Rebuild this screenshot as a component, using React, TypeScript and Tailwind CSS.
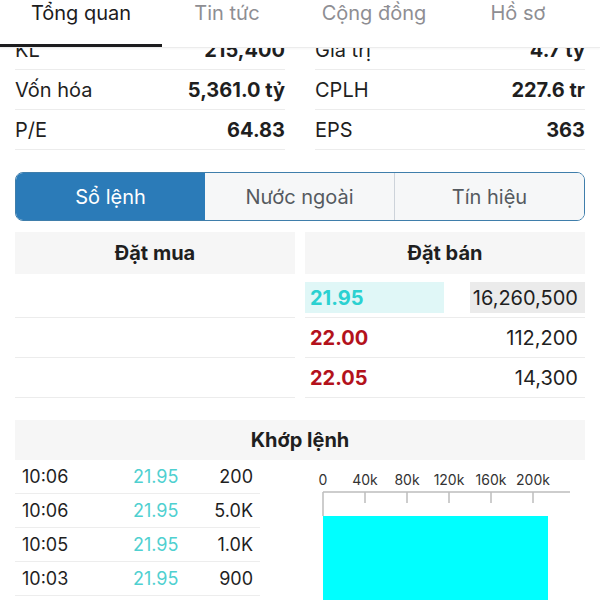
import React from "react";

// ── data ─────────────────────────────────────────────────────────────────────

const TABS = [
  { label: "Tổng quan", width: "w-[162px]", active: true },
  { label: "Tin tức", width: "w-[130px]", active: false },
  { label: "Cộng đồng", width: "w-[164px]", active: false },
  { label: "Hồ sơ", width: "w-[124px]", active: false },
];

const STATS_LEFT = [
  ["KL", "215,400"],
  ["Vốn hóa", "5,361.0 tỷ"],
  ["P/E", "64.83"],
];

const STATS_RIGHT = [
  ["Giá trị", "4.7 tỷ"],
  ["CPLH", "227.6 tr"],
  ["EPS", "363"],
];

const ASKS = [
  { price: "22.00", vol: "112,200" },
  { price: "22.05", vol: "14,300" },
];

const TRADES = [
  ["10:06", "21.95", "200"],
  ["10:06", "21.95", "5.0K"],
  ["10:05", "21.95", "1.0K"],
  ["10:03", "21.95", "900"],
];

const TICKS = ["0", "40k", "80k", "120k", "160k", "200k"];

// ── pieces ───────────────────────────────────────────────────────────────────

function StatColumn({ rows }: { rows: string[][] }) {
  return (
    <div className="flex flex-col">
      {rows.map(([label, value]) => (
        <div
          key={label}
          className="flex h-[40px] items-center justify-between border-b border-[#ececec]"
        >
          <span className="text-[20px] text-[#1f1f1f]">{label}</span>
          <span className="text-[20px] font-bold text-[#1f1f1f]">{value}</span>
        </div>
      ))}
    </div>
  );
}

function VolumeChart() {
  return (
    <svg width="280" height="140" viewBox="0 0 280 140" className="block">
      {TICKS.map((t, i) => (
        <text
          key={t}
          x={18 + i * 42}
          y={25}
          textAnchor="middle"
          fontSize="14"
          fill="#333"
          fontFamily="Inter, sans-serif"
        >
          {t}
        </text>
      ))}
      <line x1="18" y1="32" x2="265" y2="32" stroke="#bdbdbd" strokeWidth="1.5" />
      {TICKS.map((t, i) => (
        <line
          key={t}
          x1={18 + i * 42}
          y1="32"
          x2={18 + i * 42}
          y2={i === 0 ? 56 : 43}
          stroke="#bdbdbd"
          strokeWidth="1.5"
        />
      ))}
      <rect x="18" y="56" width="225" height="90" fill="#00ffff" />
    </svg>
  );
}

// ── page ─────────────────────────────────────────────────────────────────────

export default function App() {
  return (
    <div
      className="relative h-[600px] w-[600px] overflow-hidden bg-white text-[#1f1f1f]"
      style={{ fontFamily: "Inter, 'Noto Sans', sans-serif" }}
    >
      {/* top tab bar, sits over the scrolled content */}
      <header className="absolute left-0 right-0 top-0 z-10 h-[48px] border-b border-[#ececec] bg-white shadow-[0_1px_2px_rgba(0,0,0,0.04)]">
        <nav className="flex pt-[1px]">
          {TABS.map((tab) => (
            <div
              key={tab.label}
              className={`${tab.width} h-[24px] text-center text-[20px] leading-[24px] ${
                tab.active ? "text-[#1c1c1e]" : "text-[#8e8e93]"
              }`}
            >
              {tab.label}
            </div>
          ))}
        </nav>
        <div className="absolute bottom-0 left-0 h-[3px] w-[162px] bg-[#1c1c1e]" />
      </header>

      <main className="px-[15px] pt-[30px]">
        {/* stats */}
        <section className="grid grid-cols-2 gap-x-[30px]">
          <StatColumn rows={STATS_LEFT} />
          <StatColumn rows={STATS_RIGHT} />
        </section>

        {/* segmented control */}
        <div className="mt-[22px] flex h-[49px] overflow-hidden rounded-[8px] border-[1.5px] border-[#3f7eab]">
          <div className="flex flex-1 items-center justify-center bg-[#2b7bb8] text-[20px] text-white">
            Sổ lệnh
          </div>
          <div className="flex flex-1 items-center justify-center border-r border-[#cdd3da] bg-[#f6f7f8] text-[20px] text-[#555a60]">
            Nước ngoài
          </div>
          <div className="flex flex-1 items-center justify-center bg-[#f6f7f8] text-[20px] text-[#555a60]">
            Tín hiệu
          </div>
        </div>

        {/* order book */}
        <section className="mt-[11px] grid grid-cols-2 gap-x-[10px]">
          <div>
            <div className="flex h-[42px] items-center justify-center bg-[#f6f6f6] text-[20px] font-bold">
              Đặt mua
            </div>
            <div className="pt-[4px]">
              {[0, 1, 2].map((i) => (
                <div key={i} className="h-[40px] border-b border-[#ececec]" />
              ))}
            </div>
          </div>
          <div>
            <div className="flex h-[42px] items-center justify-center bg-[#f6f6f6] text-[20px] font-bold">
              Đặt bán
            </div>
            <div className="pt-[4px]">
              <div className="flex h-[40px] items-center justify-between border-b border-[#ececec]">
                <span className="flex h-[31px] w-[139px] items-center bg-[#e0f7f7] pl-[5px] text-[20px] font-bold text-[#2bd1d1]">
                  21.95
                </span>
                <span className="flex h-[31px] w-[115px] items-center justify-end bg-[#ebebeb] pr-[7px] text-[20px]">
                  16,260,500
                </span>
              </div>
              {ASKS.map((row) => (
                <div
                  key={row.price}
                  className="flex h-[40px] items-center justify-between border-b border-[#ececec] pl-[5px] pr-[7px]"
                >
                  <span className="text-[20px] font-bold text-[#b3121c]">{row.price}</span>
                  <span className="text-[20px]">{row.vol}</span>
                </div>
              ))}
            </div>
          </div>
        </section>

        {/* matched orders */}
        <section className="mt-[22px]">
          <div className="flex h-[40px] items-center justify-center bg-[#f6f6f6] text-[20px] font-bold">
            Khớp lệnh
          </div>
          <div className="flex">
            <div className="w-[245px]">
              {TRADES.map(([time, price, vol], i) => (
                <div
                  key={i}
                  className="grid h-[34px] grid-cols-[111px_1fr_auto] items-center border-b border-[#ededed] pl-[7px] pr-[7px] text-[18px]"
                >
                  <span>{time}</span>
                  <span className="text-[#4fd0d0]">{price}</span>
                  <span>{vol}</span>
                </div>
              ))}
            </div>
            <div className="ml-[45px]">
              <VolumeChart />
            </div>
          </div>
        </section>
      </main>
    </div>
  );
}
